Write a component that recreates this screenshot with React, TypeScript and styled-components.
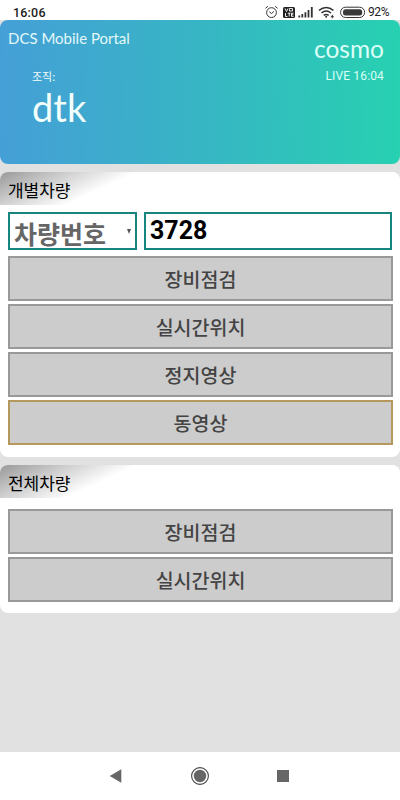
import React from "react";
import styled, { createGlobalStyle } from "styled-components";

const korean = '"Noto Sans CJK KR", sans-serif';

const GlobalStyle = createGlobalStyle`
  *, *::before, *::after { box-sizing: border-box; }
  body { margin: 0; background: #e1e1e1; font-family: ${korean}; }
`;

const Screen = styled.div`
  width: 400px;
  height: 800px;
  display: flex;
  flex-direction: column;
  overflow: hidden;
  background: #e1e1e1;
`;

const StatusBar = styled.div`
  height: 20px;
  flex: none;
  display: flex;
  justify-content: space-between;
  padding: 5px 11px 0 13px;
  background: #fff;
  color: #222;
  font: 500 12.5px/15px Roboto, sans-serif;
`;

const Clock = styled.span`
  letter-spacing: 0.2px;
`;

const StatusIcons = styled.div`
  display: flex;
  align-items: flex-start;
`;

const IconStrip = styled.svg`
  display: block;
  width: 103px;
  height: 15px;
`;

const Percent = styled.span`
  font-weight: 400;
  font-size: 12px;
  letter-spacing: -0.45px;
  white-space: nowrap;
`;

const Hero = styled.header`
  height: 144px;
  flex: none;
  display: flex;
  justify-content: space-between;
  padding: 9px 16px 0 8px;
  border-radius: 8px;
  background: linear-gradient(89deg, #459fd7 0%, #37b5c4 50%, #27d1b1 100%);
  color: #f2fffb;
  font-family: Lato, ${korean};
`;

const PortalTitle = styled.div`
  font-size: 15px;
  line-height: 18px;
  color: #e2f8f8;
`;

const Organization = styled.div`
  padding: 20px 0 0 24px;
`;

const OrganizationLabel = styled.div`
  font: 400 11px/18px ${korean};
`;

const OrganizationName = styled.div`
  font-size: 38px;
  line-height: 44px;
`;

const Account = styled.div`
  padding-top: 4px;
  text-align: right;
  color: #dcfff7;
`;

const AccountName = styled.div`
  font-size: 24.5px;
  line-height: 32px;
`;

const LiveTime = styled.div`
  padding-top: 3px;
  font: 400 12px/16px Roboto, sans-serif;
  letter-spacing: 0.15px;
`;

const Card = styled.section<{ $height: number }>`
  height: ${(p) => p.$height}px;
  flex: none;
  margin-top: 8px;
  border-radius: 8px;
  overflow: hidden;
  background: #fff;
`;

const CardTitle = styled.h2`
  height: 33px;
  margin: 0 0 7px;
  padding: 2px 8px 0;
  background: linear-gradient(155deg, #999 0, #d0d0d0 30px, #fff 58px);
  color: #000;
  font: 400 17px/31px ${korean};
  letter-spacing: -0.05px;
`;

const SearchRow = styled.div`
  display: grid;
  grid-template-columns: 129px 248px;
  grid-template-rows: 38px;
  column-gap: 7px;
  height: 38px;
  margin: 0 8px 6px;
`;

const Field = styled.div`
  display: flex;
  align-items: center;
  justify-content: space-between;
  min-height: 0;
  border: 2px solid #16857f;
  padding: 0 4px;
  background: #fff;
`;

const SelectValue = styled.span`
  margin-top: 4px;
  color: #666;
  font: 700 25px/30px ${korean};
  white-space: nowrap;
`;

const Caret = styled.svg`
  width: 4px;
  height: 5px;
`;

const VehicleNumber = styled.span`
  color: #000;
  font: 700 25px/32px Roboto, sans-serif;
`;

const Actions = styled.div<{ $offset?: number }>`
  display: flex;
  flex-direction: column;
  gap: 3px;
  padding: ${(p) => p.$offset ?? 0}px 7px 0 8px;
`;

const ActionButton = styled.button<{ $focused?: boolean }>`
  height: 45px;
  padding: 1px 0 0;
  border: 2px solid ${(p) => (p.$focused ? "#b5995c" : "#999")};
  border-radius: 0;
  background: #ccc;
  color: #444;
  font: 500 19.5px/30px ${korean};
`;

const NavigationBar = styled.nav`
  height: 48px;
  flex: none;
  margin-top: auto;
  display: flex;
  justify-content: center;
  background: #fff;
`;

const NavIcons = styled.svg`
  width: 182px;
  height: 48px;
`;

const individualActions = ["장비점검", "실시간위치", "정지영상", "동영상"];
const fleetActions = ["장비점검", "실시간위치"];

function StatusGlyphs() {
  return (
    <IconStrip viewBox="265 5 103 15" fill="none" stroke="#333" strokeWidth="1">
      <circle cx="271.5" cy="12.6" r="4.9" />
      <path d="M265.4 8.3l2.5-2M277.6 8.3l-2.5-2M269.3 11.7l2.2 1.8 2.4-2" />
      <rect x="283" y="7" width="12" height="11" rx="1.5" fill="#222" stroke="none" />
      <path
        stroke="#fff"
        strokeWidth="0.9"
        d="M285 8.5l1.5 3 1.5-3M289.5 8.5h3v2.5h-3zM285.5 13v3.5h2M287.8 13.2h2.7M289.2 13v3.5M293.5 13.2h-2v3.2h2M291.5 14.8h1.8"
      />
      <path strokeWidth="1.8" d="M299.3 17.5v-2M302.3 17.5v-3.5M305.4 17.5v-5.3M308.5 17.5v-7.5M311.8 17.5v-10.5" />
      <path strokeWidth="1.5" d="M319 10.3q7.2-5.7 14.4 0M321.4 13q4.8-3.8 9.6 0M323.7 15.4q2.5-2 5 0" />
      <circle cx="326.2" cy="16.8" r="1" fill="#333" stroke="none" />
      <path d="M332.3 14.8v3.5M330.8 16.7h3" />
      <rect x="340.6" y="7.2" width="24" height="10.3" rx="5" />
      <rect x="343" y="9.2" width="19.2" height="6.3" rx="2.5" fill="#3a3a3a" stroke="none" />
    </IconStrip>
  );
}

export default function App() {
  return (
    <>
      <GlobalStyle />
      <Screen>
        <StatusBar>
          <Clock>16:06</Clock>
          <StatusIcons>
            <StatusGlyphs />
            <Percent>92%</Percent>
          </StatusIcons>
        </StatusBar>
        <Hero>
          <div>
            <PortalTitle>DCS Mobile Portal</PortalTitle>
            <Organization>
              <OrganizationLabel>조직:</OrganizationLabel>
              <OrganizationName>dtk</OrganizationName>
            </Organization>
          </div>
          <Account>
            <AccountName>cosmo</AccountName>
            <LiveTime>LIVE 16:04</LiveTime>
          </Account>
        </Hero>
        <Card $height={285}>
          <CardTitle>개별차량</CardTitle>
          <SearchRow>
            <Field>
              <SelectValue>차량번호</SelectValue>
              <Caret viewBox="0 0 4 5"><path d="M0 0h4L2 5z" fill="#555" /></Caret>
            </Field>
            <Field>
              <VehicleNumber>3728</VehicleNumber>
            </Field>
          </SearchRow>
          <Actions>
            {individualActions.map((label) => (
              <ActionButton key={label} $focused={label === "동영상"}>{label}</ActionButton>
            ))}
          </Actions>
        </Card>
        <Card $height={148}>
          <CardTitle>전체차량</CardTitle>
          <Actions $offset={4}>
            {fleetActions.map((label) => (
              <ActionButton key={label}>{label}</ActionButton>
            ))}
          </Actions>
        </Card>
        <NavigationBar>
          <NavIcons viewBox="109 752 182 48">
            <path d="M109.7 776l11.6-6.8v13.6z" fill="#666" />
            <circle cx="200" cy="776" r="8.4" fill="#fff" stroke="#444" strokeWidth="1.1" />
            <circle cx="200" cy="776" r="6.2" fill="#666" />
            <rect x="277" y="770" width="12" height="12" fill="#666" />
          </NavIcons>
        </NavigationBar>
      </Screen>
    </>
  );
}
